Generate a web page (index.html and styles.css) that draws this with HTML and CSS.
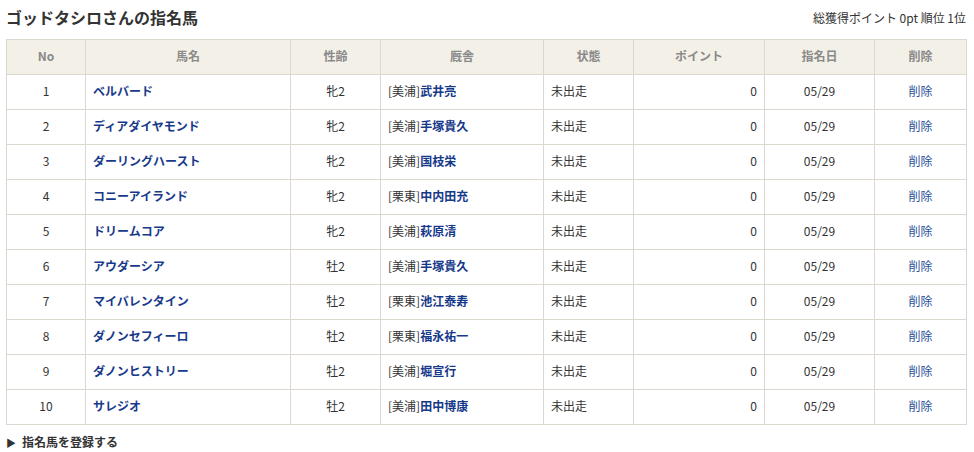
FILE: index.html
```html
<!DOCTYPE html>
<html lang="ja">
<head>
<meta charset="utf-8">
<link rel="stylesheet" href="styles.css">
</head>
<body>
<div class="page">
  <div class="top">
    <h1 class="title">ゴッドタシロさんの指名馬</h1>
    <div class="summary">総獲得ポイント 0pt 順位 1位</div>
  </div>
  <table class="list">
    <colgroup>
      <col class="c-no"><col class="c-name"><col class="c-sex"><col class="c-stable"><col class="c-state"><col class="c-pt"><col class="c-date"><col class="c-del">
    </colgroup>
    <thead>
      <tr><th>No</th><th>馬名</th><th>性齢</th><th>厩舎</th><th>状態</th><th>ポイント</th><th>指名日</th><th>削除</th></tr>
    </thead>
    <tbody>
      <tr><td class="ctr">1</td><td class="name"><a>ベルバード</a></td><td class="ctr">牝2</td><td class="stable">[美浦]<a>武井亮</a></td><td class="state">未出走</td><td class="pt">0</td><td class="ctr">05/29</td><td class="ctr"><a class="del">削除</a></td></tr>
      <tr><td class="ctr">2</td><td class="name"><a>ディアダイヤモンド</a></td><td class="ctr">牝2</td><td class="stable">[美浦]<a>手塚貴久</a></td><td class="state">未出走</td><td class="pt">0</td><td class="ctr">05/29</td><td class="ctr"><a class="del">削除</a></td></tr>
      <tr><td class="ctr">3</td><td class="name"><a>ダーリングハースト</a></td><td class="ctr">牝2</td><td class="stable">[美浦]<a>国枝栄</a></td><td class="state">未出走</td><td class="pt">0</td><td class="ctr">05/29</td><td class="ctr"><a class="del">削除</a></td></tr>
      <tr><td class="ctr">4</td><td class="name"><a>コニーアイランド</a></td><td class="ctr">牝2</td><td class="stable">[栗東]<a>中内田充</a></td><td class="state">未出走</td><td class="pt">0</td><td class="ctr">05/29</td><td class="ctr"><a class="del">削除</a></td></tr>
      <tr><td class="ctr">5</td><td class="name"><a>ドリームコア</a></td><td class="ctr">牝2</td><td class="stable">[美浦]<a>萩原清</a></td><td class="state">未出走</td><td class="pt">0</td><td class="ctr">05/29</td><td class="ctr"><a class="del">削除</a></td></tr>
      <tr><td class="ctr">6</td><td class="name"><a>アウダーシア</a></td><td class="ctr">牡2</td><td class="stable">[美浦]<a>手塚貴久</a></td><td class="state">未出走</td><td class="pt">0</td><td class="ctr">05/29</td><td class="ctr"><a class="del">削除</a></td></tr>
      <tr><td class="ctr">7</td><td class="name"><a>マイバレンタイン</a></td><td class="ctr">牡2</td><td class="stable">[栗東]<a>池江泰寿</a></td><td class="state">未出走</td><td class="pt">0</td><td class="ctr">05/29</td><td class="ctr"><a class="del">削除</a></td></tr>
      <tr><td class="ctr">8</td><td class="name"><a>ダノンセフィーロ</a></td><td class="ctr">牡2</td><td class="stable">[栗東]<a>福永祐一</a></td><td class="state">未出走</td><td class="pt">0</td><td class="ctr">05/29</td><td class="ctr"><a class="del">削除</a></td></tr>
      <tr><td class="ctr">9</td><td class="name"><a>ダノンヒストリー</a></td><td class="ctr">牡2</td><td class="stable">[美浦]<a>堀宣行</a></td><td class="state">未出走</td><td class="pt">0</td><td class="ctr">05/29</td><td class="ctr"><a class="del">削除</a></td></tr>
      <tr><td class="ctr">10</td><td class="name"><a>サレジオ</a></td><td class="ctr">牡2</td><td class="stable">[美浦]<a>田中博康</a></td><td class="state">未出走</td><td class="pt">0</td><td class="ctr">05/29</td><td class="ctr"><a class="del">削除</a></td></tr>
    </tbody>
  </table>
  <div class="register"><span class="tri">▶</span>指名馬を登録する</div>
</div>
</body>
</html>
```
FILE: styles.css
```css
* { box-sizing: border-box; }
html, body { margin: 0; padding: 0; background: #fff; }
body {
  font-family: "Noto Sans CJK JP", "Noto Sans", sans-serif;
  font-size: 12px;
  color: #333;
}
.page { padding: 0 8px 0 6px; width: 974px; }
.top {
  display: flex;
  justify-content: space-between;
  align-items: center;
  height: 36px;
  padding-bottom: 2px;
}
.title {
  margin: 0;
  font-size: 16px;
  font-weight: bold;
  color: #333;
}
.summary { font-size: 12px; color: #333; }
.list {
  margin-top: 3px;
  width: 960px;
  border-collapse: collapse;
  table-layout: fixed;
}
.c-no { width: 79px; }
.c-name { width: 205px; }
.c-sex { width: 90px; }
.c-stable { width: 163px; }
.c-state { width: 90px; }
.c-pt { width: 131px; }
.c-date { width: 110px; }
.c-del { width: 92px; }
.list th, .list td {
  border: 1px solid #dcd8d0;
  height: 35px;
  padding: 0 7px 3px;
  white-space: nowrap;
}
.list th {
  background: #f3f0e8;
  color: #8a8a8a;
  font-weight: bold;
  text-align: center;
}
.list td { background: #fff; }
.ctr { text-align: center; }
.pt { text-align: right; }
.list a { color: #17398a; font-weight: bold; text-decoration: none; }
.list a.del { color: #2a4f98; font-weight: normal; }
.register {
  margin-top: 7px;
  height: 20px;
  line-height: 20px;
  font-weight: bold;
  color: #333;
}
.tri { font-size: 10px; margin-right: 6px; color: #333; }
```
